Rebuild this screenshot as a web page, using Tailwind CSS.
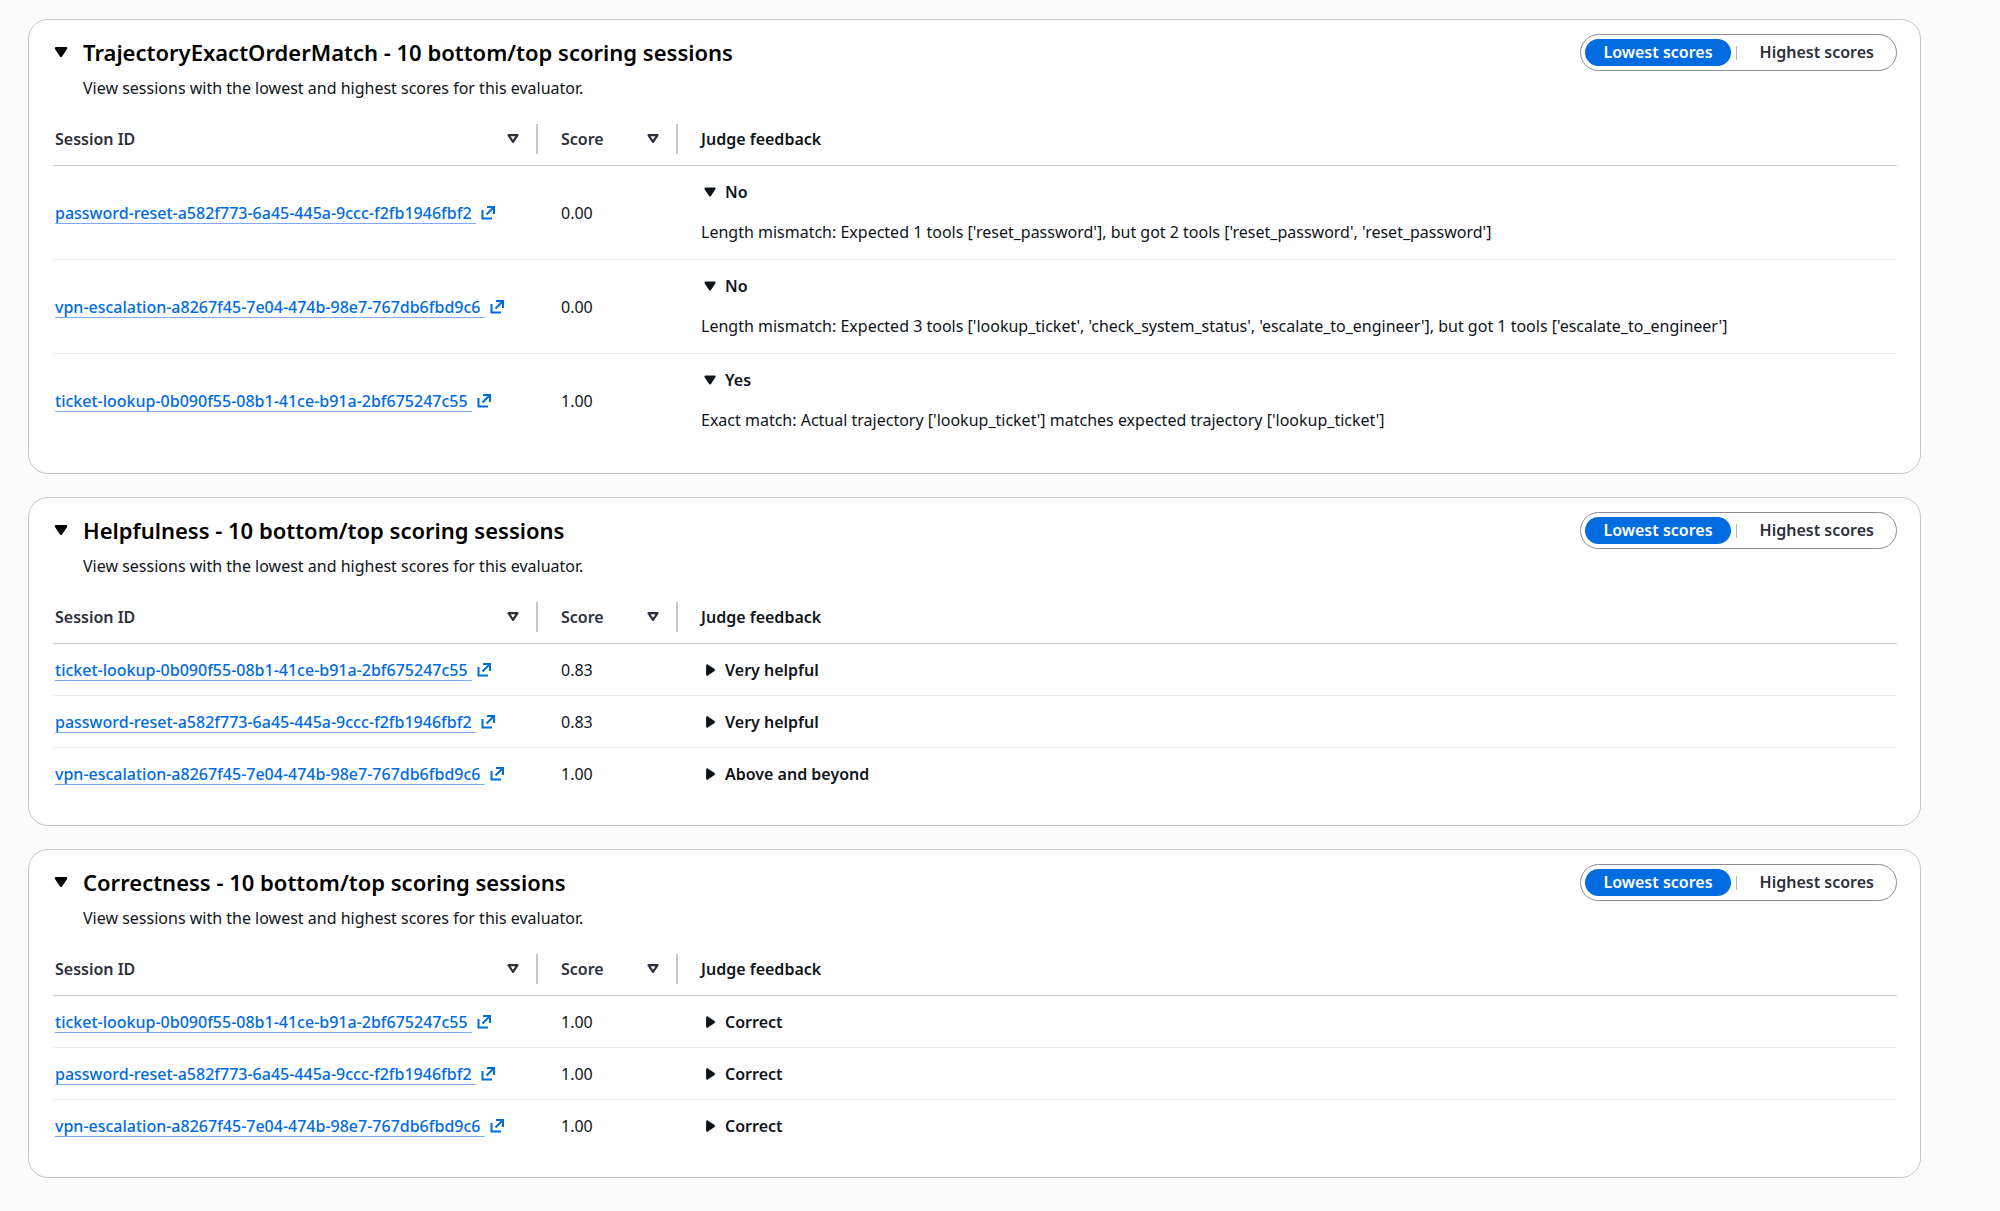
<!DOCTYPE html>
<html lang="en">
    <head>
        <meta charset="UTF-8" />
        <meta name="viewport" content="width=device-width, initial-scale=1.0" />
        <title>Evaluation results</title>
        <script src="https://cdn.jsdelivr.net/npm/@tailwindcss/browser@4"></script>
    </head>
    <body class="min-h-screen bg-[#fcfcfd] font-['Noto_Sans',sans-serif] text-base/6 text-[#0f141a]">
        <!-- Shared icons -->
        <svg class="hidden" aria-hidden="true">
            <symbol id="caret-down" viewBox="0 0 16 16">
                <path d="M4 5h8l-4 6z" fill="currentColor" stroke="currentColor" stroke-width="2" stroke-linejoin="round" />
            </symbol>
            <symbol id="caret-right" viewBox="0 0 16 16">
                <path d="M5.5 4v8l6-4z" fill="currentColor" stroke="currentColor" stroke-width="2" stroke-linejoin="round" />
            </symbol>
            <symbol id="sort" viewBox="0 0 16 16">
                <path d="M4 4.5h8l-4 6z" fill="none" stroke="currentColor" stroke-width="2" stroke-linejoin="round" />
            </symbol>
            <symbol id="external" viewBox="0 0 16 16">
                <path d="M2.5 5v8.5H12M7 2h7v7M6.5 9.5l7-7" fill="none" stroke="currentColor" stroke-width="2" />
            </symbol>
        </svg>

        <main class="flex flex-col gap-[23px] pt-[19px] pr-[79px] pb-8 pl-7">
            <!-- TrajectoryExactOrderMatch -->
            <section class="rounded-[20px] border border-[#c6c6cd] bg-white pt-3.5 pr-[23px] pb-[25px] pl-6">
                <div class="flex items-start justify-between">
                    <div>
                        <h2 class="text-[22px]/[36px] font-semibold text-black">
                            <button type="button" class="-ml-0.5 flex items-center gap-3">
                                <svg class="size-5"><use href="#caret-down" /></svg>
                                TrajectoryExactOrderMatch - 10 bottom/top scoring sessions
                            </button>
                        </h2>
                        <p class="mt-1.5 pl-[30px]">View sessions with the lowest and highest scores for this evaluator.</p>
                    </div>
                    <div class="flex items-center rounded-[20px] border border-[#8c8c94] p-1 font-semibold">
                        <button type="button" class="rounded-full bg-[#006ce0] px-[18px] leading-[27px] text-white">Lowest scores</button>
                        <span class="mx-[5px] h-3.5 w-px bg-[#b4b4bb]"></span>
                        <button type="button" class="rounded-full px-[18px] leading-[27px] text-[#2b303b]">Highest scores</button>
                    </div>
                </div>
                <table class="mt-6 w-full table-fixed border-separate border-spacing-0 text-left">
                    <thead>
                        <tr>
                            <th class="w-[485px] border-b border-[#c6c6cd] pb-[11px] pl-0.5 font-semibold text-[#2b303b]">
                                <div class="flex h-[30px] items-center justify-between border-r-2 border-[#c6c6cd] pr-3.5">
                                    Session ID
                                    <button type="button" aria-label="Sort by session ID"><svg class="size-[18px]"><use href="#sort" /></svg></button>
                                </div>
                            </th>
                            <th class="w-[140px] border-b border-[#c6c6cd] pb-[11px] pl-[23px] font-semibold text-[#2b303b]">
                                <div class="flex h-[30px] items-center justify-between border-r-2 border-[#c6c6cd] pr-3.5">
                                    Score
                                    <button type="button" aria-label="Sort by score"><svg class="size-[18px]"><use href="#sort" /></svg></button>
                                </div>
                            </th>
                            <th class="border-b border-[#c6c6cd] pb-[11px] pl-[23px] font-semibold">Judge feedback</th>
                        </tr>
                    </thead>
                    <tbody>
                        <tr>
                            <td class="border-b border-[#ebebf0] pl-0.5">
                                <a href="#" class="flex items-center gap-1 font-medium text-[#006ce0]"><span class="underline decoration-[#7fa9f2] decoration-1 underline-offset-4">password-reset-a582f773-6a45-445a-9ccc-f2fb1946fbf2&nbsp;</span><svg class="size-4"><use href="#external" /></svg></a>
                            </td>
                            <td class="border-b border-[#ebebf0] pl-[23px]">0.00</td>
                            <td class="border-b border-[#ebebf0] pt-3.5 pb-[15px] pl-[23px]">
                                <details open>
                                    <summary class="flex items-center gap-1.5 font-semibold"><svg class="size-[18px]"><use href="#caret-down" /></svg>No</summary>
                                    <p class="mt-4">Length mismatch: Expected 1 tools ['reset_password'], but got 2 tools ['reset_password', 'reset_password']</p>
                                </details>
                            </td>
                        </tr>
                        <tr>
                            <td class="border-b border-[#ebebf0] pl-0.5">
                                <a href="#" class="flex items-center gap-1 font-medium text-[#006ce0]"><span class="underline decoration-[#7fa9f2] decoration-1 underline-offset-4">vpn-escalation-a8267f45-7e04-474b-98e7-767db6fbd9c6&nbsp;</span><svg class="size-4"><use href="#external" /></svg></a>
                            </td>
                            <td class="border-b border-[#ebebf0] pl-[23px]">0.00</td>
                            <td class="border-b border-[#ebebf0] pt-3.5 pb-[15px] pl-[23px]">
                                <details open>
                                    <summary class="flex items-center gap-1.5 font-semibold"><svg class="size-[18px]"><use href="#caret-down" /></svg>No</summary>
                                    <p class="mt-4">Length mismatch: Expected 3 tools ['lookup_ticket', 'check_system_status', 'escalate_to_engineer'], but got 1 tools ['escalate_to_engineer']</p>
                                </details>
                            </td>
                        </tr>
                        <tr>
                            <td class="border-b border-transparent pl-0.5">
                                <a href="#" class="flex items-center gap-1 font-medium text-[#006ce0]"><span class="underline decoration-[#7fa9f2] decoration-1 underline-offset-4">ticket-lookup-0b090f55-08b1-41ce-b91a-2bf675247c55&nbsp;</span><svg class="size-4"><use href="#external" /></svg></a>
                            </td>
                            <td class="border-b border-transparent pl-[23px]">1.00</td>
                            <td class="border-b border-transparent pt-3.5 pb-[15px] pl-[23px]">
                                <details open>
                                    <summary class="flex items-center gap-1.5 font-semibold"><svg class="size-[18px]"><use href="#caret-down" /></svg>Yes</summary>
                                    <p class="mt-4">Exact match: Actual trajectory ['lookup_ticket'] matches expected trajectory ['lookup_ticket']</p>
                                </details>
                            </td>
                        </tr>
                    </tbody>
                </table>
            </section>

            <!-- Helpfulness -->
            <section class="rounded-[20px] border border-[#c6c6cd] bg-white pt-3.5 pr-[23px] pb-[25px] pl-6">
                <div class="flex items-start justify-between">
                    <div>
                        <h2 class="text-[22px]/[36px] font-semibold text-black">
                            <button type="button" class="-ml-0.5 flex items-center gap-3">
                                <svg class="size-5"><use href="#caret-down" /></svg>
                                Helpfulness - 10 bottom/top scoring sessions
                            </button>
                        </h2>
                        <p class="mt-1.5 pl-[30px]">View sessions with the lowest and highest scores for this evaluator.</p>
                    </div>
                    <div class="flex items-center rounded-[20px] border border-[#8c8c94] p-1 font-semibold">
                        <button type="button" class="rounded-full bg-[#006ce0] px-[18px] leading-[27px] text-white">Lowest scores</button>
                        <span class="mx-[5px] h-3.5 w-px bg-[#b4b4bb]"></span>
                        <button type="button" class="rounded-full px-[18px] leading-[27px] text-[#2b303b]">Highest scores</button>
                    </div>
                </div>
                <table class="mt-6 w-full table-fixed border-separate border-spacing-0 text-left">
                    <thead>
                        <tr>
                            <th class="w-[485px] border-b border-[#c6c6cd] pb-[11px] pl-0.5 font-semibold text-[#2b303b]">
                                <div class="flex h-[30px] items-center justify-between border-r-2 border-[#c6c6cd] pr-3.5">
                                    Session ID
                                    <button type="button" aria-label="Sort by session ID"><svg class="size-[18px]"><use href="#sort" /></svg></button>
                                </div>
                            </th>
                            <th class="w-[140px] border-b border-[#c6c6cd] pb-[11px] pl-[23px] font-semibold text-[#2b303b]">
                                <div class="flex h-[30px] items-center justify-between border-r-2 border-[#c6c6cd] pr-3.5">
                                    Score
                                    <button type="button" aria-label="Sort by score"><svg class="size-[18px]"><use href="#sort" /></svg></button>
                                </div>
                            </th>
                            <th class="border-b border-[#c6c6cd] pb-[11px] pl-[23px] font-semibold">Judge feedback</th>
                        </tr>
                    </thead>
                    <tbody>
                        <tr>
                            <td class="border-b border-[#ebebf0] pl-0.5">
                                <a href="#" class="flex items-center gap-1 font-medium text-[#006ce0]"><span class="underline decoration-[#7fa9f2] decoration-1 underline-offset-4">ticket-lookup-0b090f55-08b1-41ce-b91a-2bf675247c55&nbsp;</span><svg class="size-4"><use href="#external" /></svg></a>
                            </td>
                            <td class="border-b border-[#ebebf0] pl-[23px]">0.83</td>
                            <td class="border-b border-[#ebebf0] pt-3.5 pb-[13px] pl-[23px]">
                                <details>
                                    <summary class="flex items-center gap-1.5 font-semibold"><svg class="size-[18px]"><use href="#caret-right" /></svg>Very helpful</summary>
                                </details>
                            </td>
                        </tr>
                        <tr>
                            <td class="border-b border-[#ebebf0] pl-0.5">
                                <a href="#" class="flex items-center gap-1 font-medium text-[#006ce0]"><span class="underline decoration-[#7fa9f2] decoration-1 underline-offset-4">password-reset-a582f773-6a45-445a-9ccc-f2fb1946fbf2&nbsp;</span><svg class="size-4"><use href="#external" /></svg></a>
                            </td>
                            <td class="border-b border-[#ebebf0] pl-[23px]">0.83</td>
                            <td class="border-b border-[#ebebf0] pt-3.5 pb-[13px] pl-[23px]">
                                <details>
                                    <summary class="flex items-center gap-1.5 font-semibold"><svg class="size-[18px]"><use href="#caret-right" /></svg>Very helpful</summary>
                                </details>
                            </td>
                        </tr>
                        <tr>
                            <td class="border-b border-transparent pl-0.5">
                                <a href="#" class="flex items-center gap-1 font-medium text-[#006ce0]"><span class="underline decoration-[#7fa9f2] decoration-1 underline-offset-4">vpn-escalation-a8267f45-7e04-474b-98e7-767db6fbd9c6&nbsp;</span><svg class="size-4"><use href="#external" /></svg></a>
                            </td>
                            <td class="border-b border-transparent pl-[23px]">1.00</td>
                            <td class="border-b border-transparent pt-3.5 pb-[13px] pl-[23px]">
                                <details>
                                    <summary class="flex items-center gap-1.5 font-semibold"><svg class="size-[18px]"><use href="#caret-right" /></svg>Above and beyond</summary>
                                </details>
                            </td>
                        </tr>
                    </tbody>
                </table>
            </section>

            <!-- Correctness -->
            <section class="rounded-[20px] border border-[#c6c6cd] bg-white pt-3.5 pr-[23px] pb-[25px] pl-6">
                <div class="flex items-start justify-between">
                    <div>
                        <h2 class="text-[22px]/[36px] font-semibold text-black">
                            <button type="button" class="-ml-0.5 flex items-center gap-3">
                                <svg class="size-5"><use href="#caret-down" /></svg>
                                Correctness - 10 bottom/top scoring sessions
                            </button>
                        </h2>
                        <p class="mt-1.5 pl-[30px]">View sessions with the lowest and highest scores for this evaluator.</p>
                    </div>
                    <div class="flex items-center rounded-[20px] border border-[#8c8c94] p-1 font-semibold">
                        <button type="button" class="rounded-full bg-[#006ce0] px-[18px] leading-[27px] text-white">Lowest scores</button>
                        <span class="mx-[5px] h-3.5 w-px bg-[#b4b4bb]"></span>
                        <button type="button" class="rounded-full px-[18px] leading-[27px] text-[#2b303b]">Highest scores</button>
                    </div>
                </div>
                <table class="mt-6 w-full table-fixed border-separate border-spacing-0 text-left">
                    <thead>
                        <tr>
                            <th class="w-[485px] border-b border-[#c6c6cd] pb-[11px] pl-0.5 font-semibold text-[#2b303b]">
                                <div class="flex h-[30px] items-center justify-between border-r-2 border-[#c6c6cd] pr-3.5">
                                    Session ID
                                    <button type="button" aria-label="Sort by session ID"><svg class="size-[18px]"><use href="#sort" /></svg></button>
                                </div>
                            </th>
                            <th class="w-[140px] border-b border-[#c6c6cd] pb-[11px] pl-[23px] font-semibold text-[#2b303b]">
                                <div class="flex h-[30px] items-center justify-between border-r-2 border-[#c6c6cd] pr-3.5">
                                    Score
                                    <button type="button" aria-label="Sort by score"><svg class="size-[18px]"><use href="#sort" /></svg></button>
                                </div>
                            </th>
                            <th class="border-b border-[#c6c6cd] pb-[11px] pl-[23px] font-semibold">Judge feedback</th>
                        </tr>
                    </thead>
                    <tbody>
                        <tr>
                            <td class="border-b border-[#ebebf0] pl-0.5">
                                <a href="#" class="flex items-center gap-1 font-medium text-[#006ce0]"><span class="underline decoration-[#7fa9f2] decoration-1 underline-offset-4">ticket-lookup-0b090f55-08b1-41ce-b91a-2bf675247c55&nbsp;</span><svg class="size-4"><use href="#external" /></svg></a>
                            </td>
                            <td class="border-b border-[#ebebf0] pl-[23px]">1.00</td>
                            <td class="border-b border-[#ebebf0] pt-3.5 pb-[13px] pl-[23px]">
                                <details>
                                    <summary class="flex items-center gap-1.5 font-semibold"><svg class="size-[18px]"><use href="#caret-right" /></svg>Correct</summary>
                                </details>
                            </td>
                        </tr>
                        <tr>
                            <td class="border-b border-[#ebebf0] pl-0.5">
                                <a href="#" class="flex items-center gap-1 font-medium text-[#006ce0]"><span class="underline decoration-[#7fa9f2] decoration-1 underline-offset-4">password-reset-a582f773-6a45-445a-9ccc-f2fb1946fbf2&nbsp;</span><svg class="size-4"><use href="#external" /></svg></a>
                            </td>
                            <td class="border-b border-[#ebebf0] pl-[23px]">1.00</td>
                            <td class="border-b border-[#ebebf0] pt-3.5 pb-[13px] pl-[23px]">
                                <details>
                                    <summary class="flex items-center gap-1.5 font-semibold"><svg class="size-[18px]"><use href="#caret-right" /></svg>Correct</summary>
                                </details>
                            </td>
                        </tr>
                        <tr>
                            <td class="border-b border-transparent pl-0.5">
                                <a href="#" class="flex items-center gap-1 font-medium text-[#006ce0]"><span class="underline decoration-[#7fa9f2] decoration-1 underline-offset-4">vpn-escalation-a8267f45-7e04-474b-98e7-767db6fbd9c6&nbsp;</span><svg class="size-4"><use href="#external" /></svg></a>
                            </td>
                            <td class="border-b border-transparent pl-[23px]">1.00</td>
                            <td class="border-b border-transparent pt-3.5 pb-[13px] pl-[23px]">
                                <details>
                                    <summary class="flex items-center gap-1.5 font-semibold"><svg class="size-[18px]"><use href="#caret-right" /></svg>Correct</summary>
                                </details>
                            </td>
                        </tr>
                    </tbody>
                </table>
            </section>
        </main>
    </body>
</html>
